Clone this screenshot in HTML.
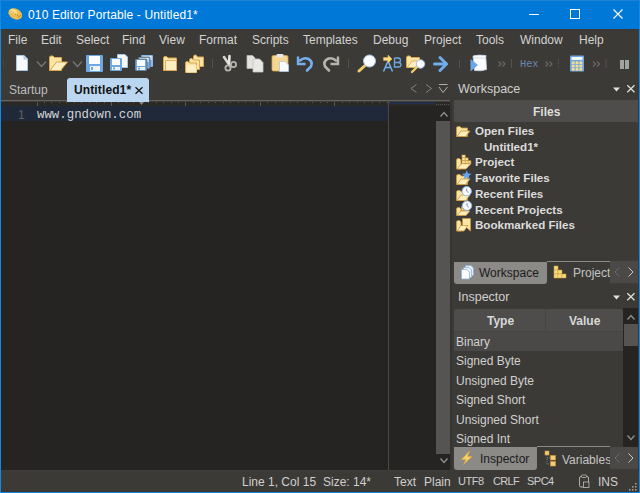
<!DOCTYPE html>
<html><head><meta charset="utf-8">
<style>
*{box-sizing:border-box}
html,body{margin:0;padding:0}
body{width:640px;height:493px;position:relative;overflow:hidden;background:#3c3a36;font-family:"Liberation Sans",sans-serif;font-size:12px;color:#d2d2d2}
.a{position:absolute;white-space:pre;line-height:1}
.t{position:absolute;white-space:pre;line-height:14px}
svg{position:absolute;overflow:visible}
</style></head><body>
<!-- title bar -->
<div class="a" style="left:0;top:0;width:640px;height:29px;background:#0078d7"></div>
<svg style="left:0;top:0" width="30" height="28"><ellipse cx="15.3" cy="13.9" rx="7.3" ry="5.2" transform="rotate(28 15.3 13.9)" fill="#ecbd4e"/><ellipse cx="13.5" cy="11.5" rx="4" ry="2.2" transform="rotate(20 13.5 11.5)" fill="#f8dc88"/><path d="M10.5 11 L19.5 16.5" stroke="#a77a28" stroke-width="1" stroke-dasharray="1 1.6"/><path d="M18 17.5 L21 15" stroke="#b88a30" stroke-width="1"/></svg>
<div class="t" style="left:28px;top:8px;color:#fff;font-size:12px;letter-spacing:0.14px">010 Editor Portable - Untitled1*</div>
<div class="a" style="left:529px;top:14px;width:10px;height:1px;background:#fff"></div>
<div class="a" style="left:570px;top:9px;width:10px;height:10px;border:1px solid #fff"></div>
<svg style="left:613px;top:9px" width="10" height="10"><path d="M0.5 0.5 L9.5 9.5 M9.5 0.5 L0.5 9.5" stroke="#fff" stroke-width="1.1"/></svg>

<!-- window borders -->
<div class="a" style="left:0;top:0;width:640px;height:1px;background:#1c82d6;z-index:50"></div>
<div class="a" style="left:0;top:0;width:1px;height:493px;background:#1787e0;z-index:50"></div>
<div class="a" style="left:639px;top:0;width:1px;height:493px;background:#1787e0;z-index:50"></div>
<div class="a" style="left:0;top:491px;width:640px;height:1px;background:#3a342c;z-index:49"></div>
<div class="a" style="left:0;top:492px;width:640px;height:1px;background:#1787e0;z-index:50"></div>

<!-- menu -->
<div class="t" style="left:8px;top:33px">File</div>
<div class="t" style="left:41px;top:33px">Edit</div>
<div class="t" style="left:76px;top:33px">Select</div>
<div class="t" style="left:122px;top:33px">Find</div>
<div class="t" style="left:159px;top:33px">View</div>
<div class="t" style="left:199px;top:33px">Format</div>
<div class="t" style="left:252px;top:33px">Scripts</div>
<div class="t" style="left:303px;top:33px">Templates</div>
<div class="t" style="left:373px;top:33px">Debug</div>
<div class="t" style="left:424px;top:33px">Project</div>
<div class="t" style="left:476px;top:33px">Tools</div>
<div class="t" style="left:520px;top:33px">Window</div>
<div class="t" style="left:579px;top:33px">Help</div>

<!-- toolbar -->
<svg style="left:0;top:0" width="640" height="80" viewBox="0 0 640 80">
<g id="tb">
<!-- grip -->
<path d="M3.5 59 V69" stroke="#4c4a45" stroke-width="1" stroke-dasharray="1 1"/>
<!-- new doc -->
<path d="M16.5 55.5 H24 L27.5 59 V70.5 H16.5 Z" fill="#f7f9fd" stroke="#a8c6e6" stroke-width="1"/>
<path d="M24 55.5 V59 H27.5" fill="#cadcf0" stroke="#a8c6e6" stroke-width="1"/>
<!-- chevron -->
<path d="M37 61.5 L41.5 66.5 L46 61.5" fill="none" stroke="#797874" stroke-width="1.2"/>
<!-- open folder -->
<path d="M49.5 57.5 Q49.5 56 51 56 H53 L54.5 57.5 H61.5 V70.5 H49.5 Z" fill="#f9e4a4" stroke="#d8a64c" stroke-width="1"/>
<path d="M50 70.5 L56.5 62 H67.5 L60.5 70.5 Z" fill="#fdefc2" stroke="#d8a64c" stroke-width="1"/>
<!-- chevron -->
<path d="M73 61.5 L77.5 66.5 L82 61.5" fill="none" stroke="#797874" stroke-width="1.2"/>
<!-- save -->
<rect x="86" y="55" width="17" height="17" rx="1" fill="#6ea8e4"/>
<rect x="89" y="56" width="11" height="8" fill="#fafcff"/>
<rect x="90" y="66" width="10" height="5" fill="#eef3fa"/>
<rect x="91" y="67" width="2" height="3" fill="#6ea8e4"/>
<!-- save as -->
<path d="M117.5 54.5 H125 L127.5 57 V67.5 H117.5 Z" fill="#f7f9fd" stroke="#a8c6e6" stroke-width="1"/>
<rect x="110" y="58" width="12" height="13" rx="1" fill="#6ea8e4"/>
<rect x="112" y="59" width="8" height="6" fill="#fafcff"/>
<rect x="112" y="67" width="8" height="3" fill="#eef3fa"/>
<rect x="113" y="67.5" width="2" height="2" fill="#6ea8e4"/>
<!-- save all -->
<rect x="141" y="55" width="12" height="12" rx="1" fill="#8ab8e8"/>
<rect x="142.5" y="56" width="9" height="4" fill="#eaf2fb"/>
<rect x="138" y="57" width="12" height="12" rx="1" fill="#7cb0e6" stroke="#3c3a36" stroke-width="0.6"/>
<rect x="139.5" y="58" width="9" height="4" fill="#f0f6fc"/>
<rect x="135" y="59" width="12" height="12" rx="1" fill="#6ea8e4" stroke="#3c3a36" stroke-width="0.6"/>
<rect x="137" y="60" width="8" height="6" fill="#fafcff"/>
<rect x="137" y="67" width="8" height="3" fill="#eef3fa"/>
<rect x="138" y="67.5" width="2" height="2" fill="#6ea8e4"/>
<!-- close folder -->
<path d="M163.5 58 Q163.5 56.5 165 56.5 H166.5 L168 58 H176.5 V70.5 H163.5 Z" fill="#f9e4a4" stroke="#d8a64c" stroke-width="1"/>
<path d="M165.5 60.5 H176.5 V70.5 H165.5 Z" fill="#fdefc2" stroke="#d8a64c" stroke-width="0.8"/>
<!-- close all -->
<path d="M193.5 57 Q193.5 55 195 55 H196 L197.5 57 H203.5 V66.5 H193.5 Z" fill="#f9e4a4" stroke="#d8a64c" stroke-width="1"/>
<path d="M189.5 60 Q189.5 58.5 191 58.5 H192 L193.5 60 H199.5 V69.5 H189.5 Z" fill="#f9e4a4" stroke="#d8a64c" stroke-width="1"/>
<path d="M185.5 63 Q185.5 61.5 187 61.5 H188 L189.5 63 H196.5 V72.5 H185.5 Z" fill="#f9e4a4" stroke="#d8a64c" stroke-width="1"/>
<path d="M186.5 65 H196.5 V72.5 H186.5 Z" fill="#fdefc2"/>
<!-- separator -->
<path d="M212.5 59 V68" stroke="#55534e" stroke-width="1"/>
<!-- scissors -->
<path d="M224 57 L230 66" stroke="#d8d8d0" stroke-width="2.6" stroke-linecap="round"/>
<path d="M229.5 56 L229 64" stroke="#e8e8e0" stroke-width="2.6" stroke-linecap="round"/>
<circle cx="228" cy="68" r="2.6" fill="none" stroke="#b4b4ac" stroke-width="1.8"/>
<circle cx="233.5" cy="64.5" r="2.6" fill="none" stroke="#b4b4ac" stroke-width="1.8"/>
<!-- copy -->
<path d="M247 55.5 H252.5 L255 58 V68.5 H247 Z" fill="#e3e3e0" stroke="#bdbdb8" stroke-width="0.8"/>
<path d="M253 59 H259.5 L263 62.5 V72 H253 Z" fill="#e8e8e5" stroke="#c4c4bf" stroke-width="0.8"/>
<!-- paste -->
<rect x="272" y="55.5" width="16" height="15.5" rx="1.5" fill="#f6d78f" stroke="#d9a64b" stroke-width="0.8"/>
<rect x="276.5" y="54" width="7" height="3.5" rx="1" fill="#e8e8ea"/>
<path d="M279.5 61.5 H285 L288.5 65 V71.5 H279.5 Z" fill="#fafbfd" stroke="#a8c6e6" stroke-width="0.8"/>
<!-- undo -->
<path d="M300 60.5 Q304 57 308.5 59 Q313 61.5 311 66.5 L307 70.5" fill="none" stroke="#74b0ee" stroke-width="2.6" stroke-linecap="round"/>
<path d="M298 56.5 V64 H305.5" fill="none" stroke="#74b0ee" stroke-width="2.4" stroke-linejoin="miter"/>
<!-- redo -->
<path d="M336 60.5 Q332 57 327.5 59 Q323 61.5 325 66.5 L329 70.5" fill="none" stroke="#b5b5b0" stroke-width="2.6" stroke-linecap="round"/>
<path d="M338 56.5 V64 H330.5" fill="none" stroke="#b5b5b0" stroke-width="2.4"/>
<!-- separator -->
<path d="M348.5 59 V68" stroke="#55534e" stroke-width="1"/>
<!-- find -->
<path d="M359 71 L365 65.5" stroke="#f2ce6a" stroke-width="3" stroke-linecap="round"/>
<circle cx="369.5" cy="61" r="6" fill="#fbfcff" stroke="#a8c4e4" stroke-width="1"/>
<!-- replace -->
<path d="M383.5 71.5 L388 61 L392.5 71.5 M385.2 67.5 H390.8" fill="none" stroke="#74b0ee" stroke-width="1.5"/>
<path d="M394.5 58 H398 Q400.5 58 400.5 60.3 Q400.5 62.5 398 62.5 H394.5 M398 62.5 Q401 62.5 401 64.8 Q401 67 398 67 H394.5 V58" fill="none" stroke="#6da7e6" stroke-width="1.3"/>
<path d="M383.5 57.5 H388 V55 L392 59 L388 63 V60.5 H383.5 Z" fill="#f8dc84" stroke="#e2b450" stroke-width="0.6"/>
<!-- find in files -->
<path d="M406.5 57.5 Q406.5 56 408 56 H410 L411.5 57.5 H419.5 V67.5 H406.5 Z" fill="#f9e4a4" stroke="#d8a64c" stroke-width="1"/>
<path d="M407 67.5 L412 61 H420 L415 67.5 Z" fill="#fdefc2" stroke="#d8a64c" stroke-width="0.8"/>
<path d="M412 72 L417 67" stroke="#f2ce6a" stroke-width="2.4" stroke-linecap="round"/>
<circle cx="420.5" cy="64" r="4.2" fill="#fbfcff" stroke="#a8c4e4" stroke-width="1"/>
<!-- goto -->
<path d="M434.5 64 H446" stroke="#6fadec" stroke-width="3" stroke-linecap="round"/>
<path d="M440 57.5 L446.5 64 L440 70.5" fill="none" stroke="#6fadec" stroke-width="3" stroke-linecap="round" stroke-linejoin="round"/>
<!-- separator -->
<path d="M459.5 60 V68" stroke="#55534e" stroke-width="1"/>
<!-- script -->
<path d="M473 56 Q478 54.5 486 55.5 Q485.5 58 486 60 L486.5 69.5 Q481 71.5 474.5 70.5 Z" fill="#fbfcfe" stroke="#c9d8ea" stroke-width="0.8"/>
<path d="M473.5 58 H485.5" stroke="#8fb6e0" stroke-width="0.8" stroke-dasharray="1 1"/><path d="M470.5 59 L478 65 L470.5 71.5 Z" fill="#6aa8ea"/>
<!-- >> -->
<path d="M498.5 61.5 L501 64 L498.5 66.5 M502.5 61.5 L505 64 L502.5 66.5" fill="none" stroke="#6a6964" stroke-width="1.2"/>
<path d="M511.5 59 V68" stroke="#55534e" stroke-width="1"/>
<path d="M545.5 61.5 L548 64 L545.5 66.5 M549.5 61.5 L552 64 L549.5 66.5" fill="none" stroke="#6a6964" stroke-width="1.2"/>
<path d="M558.5 59 V68" stroke="#55534e" stroke-width="1" stroke-dasharray="1 1"/>
<!-- calculator -->
<rect x="570" y="55.5" width="14" height="16" rx="1" fill="#6ea8e4"/>
<rect x="571.5" y="57" width="11" height="3" fill="#f4f8fd"/>
<g fill="#f6de8c"><rect x="571.8" y="61.5" width="2.8" height="2.6"/><rect x="575.6" y="61.5" width="2.8" height="2.6"/><rect x="579.4" y="61.5" width="2.8" height="2.6"/><rect x="571.8" y="64.8" width="2.8" height="2.6"/><rect x="575.6" y="64.8" width="2.8" height="2.6"/><rect x="579.4" y="64.8" width="2.8" height="2.6"/><rect x="571.8" y="68.1" width="2.8" height="2.6"/><rect x="575.6" y="68.1" width="2.8" height="2.6"/><rect x="579.4" y="68.1" width="2.8" height="2.6"/></g>
<path d="M593 61.5 L595.5 64 L593 66.5 M597 61.5 L599.5 64 L597 66.5" fill="none" stroke="#6a6964" stroke-width="1.2"/>
<path d="M606 59 V68" stroke="#55534e" stroke-width="1"/>
<!-- pause -->
<rect x="620" y="60" width="4" height="9" fill="#a3a39d"/>
<rect x="625" y="60" width="4" height="9" fill="#a3a39d"/>
</g>
</svg>
<div class="a" style="left:520px;top:59px;font-family:'Liberation Mono',monospace;font-size:10.3px;line-height:10px;color:#6a88b0">Hex</div>

<!-- tab bar -->
<div class="t" style="left:9px;top:83px;color:#bdbdbd">Startup</div>
<div class="a" style="left:67px;top:78px;width:82px;height:24px;z-index:2;background:#bad6f0;border-radius:3px 3px 0 0"></div>
<div class="t" style="left:74px;top:83px;color:#111;font-weight:bold;z-index:3;letter-spacing:0.12px">Untitled1*</div>
<svg style="left:135px;top:87px;z-index:3" width="8" height="8"><path d="M0.5 0.3 L7.5 6.8 M7.5 0.3 L0.5 6.8" stroke="#111" stroke-width="1.2"/></svg>
<svg style="left:410px;top:84px" width="40" height="10"><path d="M6.5 0.5 L1 4.5 L6.5 8.5" fill="none" stroke="#85847f" stroke-width="1"/><path d="M16 0.5 L21.5 4.5 L16 8.5" fill="none" stroke="#85847f" stroke-width="1"/><path d="M29 0.5 H37.5 M29 3 L33 8.5 L37.5 3" fill="none" stroke="#b0aea8" stroke-width="1"/></svg>

<!-- editor -->
<div class="a" style="left:1px;top:100px;width:450px;height:1px;background:#64635f"></div>
<div class="a" style="left:1px;top:101px;width:450px;height:1px;background:#3e3d3a"></div>
<div class="a" style="left:1px;top:102px;width:450px;height:4px;background:#2a2927"></div>
<div class="a" style="left:1px;top:106px;width:449px;height:364px;background:#252422"></div>
<div class="a" style="left:1px;top:106px;width:387px;height:15px;background:#1f2939"></div>
<svg style="left:0;top:0" width="640" height="120"><path d="M37.5 102 V106 M44.5 102 V103 M51.5 102 V103 M59.5 102 V103 M66.5 102 V103 M74.5 102 V103 M81.5 102 V103 M89.5 102 V103 M96.5 102 V103 M104.5 102 V103 M111.5 102 V106 M118.5 102 V103 M126.5 102 V103 M133.5 102 V103 M141.5 102 V103 M148.5 102 V103 M156.5 102 V103 M163.5 102 V103 M171.5 102 V103 M178.5 102 V103 M185.5 102 V106 M193.5 102 V103 M200.5 102 V103 M208.5 102 V103 M215.5 102 V103 M223.5 102 V103 M230.5 102 V103 M238.5 102 V103 M245.5 102 V103 M253.5 102 V103 M260.5 102 V106 M267.5 102 V103 M275.5 102 V103 M282.5 102 V103 M290.5 102 V103 M297.5 102 V103 M305.5 102 V103 M312.5 102 V103 M320.5 102 V103 M327.5 102 V103 M334.5 102 V106 M342.5 102 V103 M349.5 102 V103 M357.5 102 V103 M364.5 102 V103 M372.5 102 V103 M379.5 102 V103 M387.5 102 V103" stroke="#5a5854" stroke-width="1"/><path d="M139 102 H144 L141.5 105Z" fill="#85847f"/><rect x="389" y="102" width="46" height="2" fill="#22304a"/><path d="M436 104.5 H450" stroke="#55534f" stroke-dasharray="1 1"/></svg>
<div class="a" style="left:388px;top:101px;width:1px;height:369px;background:#4a4946"></div>
<div class="a" style="left:18px;top:108px;color:#626262;font-family:'Liberation Sans',sans-serif;font-size:12px;line-height:14px">1</div>
<div class="a" style="left:37px;top:108px;color:#d4d4d4;font-family:'Liberation Mono',monospace;font-size:12.4px;line-height:14px">www.gndown.com</div>
<!-- scrollbar -->
<div class="a" style="left:436px;top:121px;width:14px;height:333px;background:#555452"></div>
<svg style="left:439.5px;top:111px" width="8" height="6"><path d="M0.5 5.5 L4 1.5 L7.5 5.5" fill="none" stroke="#8e8d8a" stroke-width="1.4"/></svg>
<svg style="left:439.5px;top:458px" width="8" height="6"><path d="M0.5 0.5 L4 4.5 L7.5 0.5" fill="none" stroke="#8e8d8a" stroke-width="1.4"/></svg>

<!-- right panel -->
<div class="a" style="left:450px;top:100px;width:2px;height:370px;background:#353431"></div>
<div class="t" style="left:458px;top:82px;font-size:12.5px;color:#d0d0d0">Workspace</div>
<svg style="left:613px;top:86px" width="22" height="8"><path d="M0 1.5 H7 L3.5 5.5Z" fill="#e0e0e0"/><path d="M14.3 -0.7 L21.5 6.3 M21.5 -0.7 L14.3 6.3" stroke="#e4e4e0" stroke-width="1.2"/></svg>
<div class="a" style="left:454px;top:100px;width:184px;height:22px;background:#4e4d4b;border-radius:2px 0 0 0"></div>
<div class="t" style="left:533px;top:105px;font-weight:bold;color:#dcdcdc">Files</div>

<div class="t" style="left:475px;top:124px;font-weight:bold;font-size:11.6px;color:#dcdcdc">Open Files</div>
<div class="t" style="left:484px;top:140px;font-weight:bold;font-size:11.6px;color:#dcdcdc">Untitled1*</div>
<div class="t" style="left:475px;top:155px;font-weight:bold;font-size:11.6px;color:#dcdcdc">Project</div>
<div class="t" style="left:475px;top:171px;font-weight:bold;font-size:11.6px;color:#dcdcdc">Favorite Files</div>
<div class="t" style="left:475px;top:187px;font-weight:bold;font-size:11.6px;color:#dcdcdc">Recent Files</div>
<div class="t" style="left:475px;top:203px;font-weight:bold;font-size:11.6px;color:#dcdcdc">Recent Projects</div>
<div class="t" style="left:475px;top:218px;font-weight:bold;font-size:11.6px;color:#dcdcdc">Bookmarked Files</div>

<!-- panel tabs -->
<div class="a" style="left:454px;top:262px;width:93px;height:22px;background:#8b8a87;border-radius:0 0 3px 3px"></div>
<div class="t" style="left:479px;top:266px;color:#1b1b1b">Workspace</div>
<div class="a" style="left:547px;top:261px;width:63px;height:1px;background:#8b8a87"></div>
<div class="t" style="left:573px;top:266px;color:#c4c4c4">Project</div>
<div class="a" style="left:610px;top:261px;width:28px;height:22px;background:#4a4947"></div>
<svg style="left:614px;top:267px" width="22" height="10"><path d="M5.5 0.5 L1 5 L5.5 9.5" fill="none" stroke="#6e6d6a" stroke-width="1"/><path d="M14.5 0.5 L19 5 L14.5 9.5" fill="none" stroke="#c8c8c8" stroke-width="1"/></svg>

<div class="t" style="left:458px;top:290px;font-size:12.5px;color:#d0d0d0">Inspector</div>
<svg style="left:613px;top:294px" width="22" height="8"><path d="M0 1.5 H7 L3.5 5.5Z" fill="#e0e0e0"/><path d="M14.3 -0.7 L21.5 6.3 M21.5 -0.7 L14.3 6.3" stroke="#e4e4e0" stroke-width="1.2"/></svg>

<div class="a" style="left:454px;top:309px;width:169px;height:22px;background:#4e4d4b;border-radius:3px 3px 0 0"></div>

<div class="t" style="left:487px;top:314px;font-weight:bold;color:#d8d8d8">Type</div>
<div class="t" style="left:569px;top:314px;font-weight:bold;color:#d8d8d8">Value</div>
<div class="a" style="left:454px;top:331px;width:169px;height:20px;background:#4a4947"></div>
<svg style="left:0;top:0" width="640" height="493"><path d="M545.5 309 V331" stroke="#403f3d" stroke-width="1" stroke-dasharray="1 1"/><path d="M454 331.5 H623" stroke="#403f3d" stroke-width="1" stroke-dasharray="1 1"/></svg>
<div class="t" style="left:456px;top:335px;color:#d0d0d0">Binary</div>
<div class="t" style="left:456px;top:354px;color:#d0d0d0">Signed Byte</div>
<div class="t" style="left:456px;top:374px;color:#d0d0d0">Unsigned Byte</div>
<div class="t" style="left:456px;top:393px;color:#d0d0d0">Signed Short</div>
<div class="t" style="left:456px;top:413px;color:#d0d0d0">Unsigned Short</div>
<div class="t" style="left:456px;top:432px;color:#d0d0d0">Signed Int</div>
<div class="a" style="left:623px;top:308px;width:15px;height:139px;background:#252422"></div>
<div class="a" style="left:624px;top:324px;width:14px;height:22px;background:#555452"></div>
<svg style="left:627px;top:314px" width="8" height="6"><path d="M0.5 5.5 L4 1.5 L7.5 5.5" fill="none" stroke="#8e8d8a" stroke-width="1.4"/></svg>
<svg style="left:627px;top:435px" width="8" height="6"><path d="M0.5 0.5 L4 4.5 L7.5 0.5" fill="none" stroke="#8e8d8a" stroke-width="1.4"/></svg>

<!-- bottom panel tabs -->
<div class="a" style="left:454px;top:447px;width:83px;height:23px;background:#8b8a87;border-radius:0 0 3px 3px"></div>
<div class="t" style="left:480px;top:452px;color:#1b1b1b">Inspector</div>
<div class="a" style="left:537px;top:446px;width:73px;height:1px;background:#8b8a87"></div>
<div class="t" style="left:562px;top:453px;color:#c4c4c4">Variables</div>
<div class="a" style="left:610px;top:447px;width:28px;height:22px;background:#4a4947"></div>
<svg style="left:614px;top:453px" width="22" height="10"><path d="M5.5 0.5 L1 5 L5.5 9.5" fill="none" stroke="#6e6d6a" stroke-width="1"/><path d="M14.5 0.5 L19 5 L14.5 9.5" fill="none" stroke="#c8c8c8" stroke-width="1"/></svg>

<!-- status bar -->
<svg style="left:0;top:0" width="640" height="493"><path d="M2 470.5 H450" stroke="#4a4843" stroke-width="1" stroke-dasharray="1 3"/></svg>
<div class="t" style="left:242px;top:475px;color:#cfcfcf">Line 1, Col 15</div>
<div class="t" style="left:323px;top:475px;color:#cfcfcf">Size: 14*</div>
<div class="t" style="left:394px;top:475px;color:#cfcfcf">Text</div>
<div class="t" style="left:424px;top:475px;color:#cfcfcf">Plain</div>
<div class="t" style="left:458px;top:474px;color:#cfcfcf;font-size:11px;letter-spacing:-0.5px">UTF8</div>
<div class="t" style="left:493px;top:474px;color:#cfcfcf;font-size:11px;letter-spacing:-0.7px">CRLF</div>
<div class="t" style="left:527px;top:474px;color:#cfcfcf;font-size:11px;letter-spacing:-0.5px">SPC4</div>
<div class="t" style="left:598px;top:475px;color:#cfcfcf">INS</div>
<!-- icons -->
<svg style="left:0;top:0" width="640" height="493" viewBox="0 0 640 493">

<g transform="translate(456 126)">
<path d="M0.5 2 Q0.5 0.5 2 0.5 H4 L5.5 2 H11.5 V10.5 H0.5 Z" fill="#f8e3a0" stroke="#cc963c" stroke-width="0.8"/>
<path d="M1 10.5 L5 5 H14 L9.5 10.5 Z" fill="#fcefbf" stroke="#cc963c" stroke-width="0.8"/>
</g>
<!-- project -->
<path d="M456.5 160 Q456.5 158.5 458 158.5 H459.5 L461 160 V169 H456.5 Z" fill="#f8e3a0" stroke="#cc963c" stroke-width="0.8"/>
<g transform="translate(462 155)" fill="#fae7a6" stroke="#cc963c" stroke-width="0.6">
<rect x="0" y="0" width="3.2" height="2.9"/><rect x="0" y="2.9" width="3.2" height="2.9"/><rect x="0" y="5.8" width="3.2" height="2.9"/>
<rect x="3.2" y="2.9" width="2.9" height="2.9"/><rect x="3.2" y="5.8" width="2.9" height="2.9"/>
<rect x="6.1" y="5.8" width="2.8" height="2.9"/>
</g>
<path d="M457 169 L461.5 163.7 H471 L466 169 Z" fill="#fcefbf" stroke="#cc963c" stroke-width="0.8"/>
<!-- favorite -->
<g transform="translate(456 174)">
<path d="M0.5 2 Q0.5 0.5 2 0.5 H4 L5.5 2 H11.5 V10.5 H0.5 Z" fill="#f8e3a0" stroke="#cc963c" stroke-width="0.8"/>
<path d="M1 10.5 L5 5 H14 L9.5 10.5 Z" fill="#fcefbf" stroke="#cc963c" stroke-width="0.8"/>
</g>
<path d="M466.7 170.3 L468.1 173.5 L471.5 173.8 L468.9 176 L469.8 179.3 L466.7 177.5 L463.6 179.3 L464.5 176 L461.9 173.8 L465.3 173.5 Z" fill="#64a4ec"/>
<!-- recent files -->
<g transform="translate(456 190)">
<path d="M0.5 2 Q0.5 0.5 2 0.5 H4 L5.5 2 H11.5 V10.5 H0.5 Z" fill="#f8e3a0" stroke="#cc963c" stroke-width="0.8"/>
<path d="M1 10.5 L5 5 H14 L9.5 10.5 Z" fill="#fcefbf" stroke="#cc963c" stroke-width="0.8"/>
</g>
<circle cx="466.7" cy="191.2" r="4.7" fill="#f6f8fc" stroke="#92b6e0" stroke-width="0.9"/>
<path d="M466.7 188.6 V191.2 L468.5 192.7" fill="none" stroke="#5f7da6" stroke-width="0.8"/>
<!-- recent projects -->
<path d="M456.5 209 Q456.5 207.5 458 207.5 H459.5 L461 209 V215.5 H456.5 Z" fill="#f8e3a0" stroke="#cc963c" stroke-width="0.8"/>
<g transform="translate(461.5 206.5) scale(0.7)" fill="#fae7a6" stroke="#cc963c" stroke-width="0.6">
<rect x="0" y="0" width="3.2" height="2.9"/><rect x="0" y="2.9" width="3.2" height="2.9"/><rect x="0" y="5.8" width="3.2" height="2.9"/>
<rect x="3.2" y="2.9" width="2.9" height="2.9"/><rect x="3.2" y="5.8" width="2.9" height="2.9"/>
<rect x="6.1" y="5.8" width="2.8" height="2.9"/>
</g>
<path d="M457 215.5 L461 211 H470 L466 215.5 Z" fill="#fcefbf" stroke="#cc963c" stroke-width="0.8"/>
<circle cx="467" cy="205.7" r="4.7" fill="#f6f8fc" stroke="#92b6e0" stroke-width="0.9"/>
<path d="M467 203.1 V205.7 L468.8 207.2" fill="none" stroke="#5f7da6" stroke-width="0.8"/>
<!-- bookmarked -->
<path d="M456.5 222 Q456.5 220.5 458 220.5 H459.5 L461 222 V231 H456.5 Z" fill="#f8e3a0" stroke="#cc963c" stroke-width="0.8"/>
<path d="M462.5 218.5 H470.5 V231 L466.5 227.5 L462.5 231 Z" fill="#f9e6a4" stroke="#cc963c" stroke-width="0.8"/>
<path d="M457 231 L461 225.5 H468 L464 231 Z" fill="#fcefbf" stroke="#cc963c" stroke-width="0.8"/>
<!-- panel tab icons: workspace -->
<g>
<path d="M465.5 265.5 H471 L473.5 268 V275.5 H465.5 Z" fill="#e4ecf6" stroke="#8fb0d6" stroke-width="0.8"/>
<path d="M463.5 267.5 H469 L471.5 270 V277.5 H463.5 Z" fill="#eef3fa" stroke="#8fb0d6" stroke-width="0.8"/>
<path d="M461.5 269.5 H467 L469.5 272 V279 H461.5 Z" fill="#fafcff" stroke="#8fb0d6" stroke-width="0.8"/>
</g>
<!-- project tab icon -->
<g fill="#f6d97e" stroke="#c99a3c" stroke-width="0.5">
<rect x="554" y="266" width="4" height="4"/><rect x="554" y="270" width="4" height="4"/><rect x="554" y="274" width="4" height="4"/>
<rect x="558" y="270" width="4" height="4"/><rect x="558" y="274" width="4" height="4"/>
<rect x="562" y="274" width="4" height="4"/>
</g>
<!-- inspector lightning -->
<path d="M469.5 451 L461.5 459.5 H466 L463.5 464.5 L472 456.5 H467.5 Z" fill="#f6d25e" stroke="#dca83a" stroke-width="0.6"/>
<!-- variables icon -->
<g>
<rect x="545" y="451" width="4" height="4" fill="#f2cf74" stroke="#c89538" stroke-width="0.6"/>
<rect x="550.5" y="455.5" width="5" height="4.5" fill="#f2cf74" stroke="#c89538" stroke-width="0.6"/>
<rect x="550.5" y="461.5" width="5" height="4.5" fill="#f2cf74" stroke="#c89538" stroke-width="0.6"/>
<path d="M547 455 V464 H550.5 M547 458 H550.5" fill="none" stroke="#8a8a88" stroke-width="0.8" stroke-dasharray="1 1"/>
</g>
<!-- status clipboard -->
<g>
<rect x="579.5" y="476.5" width="9" height="10.5" rx="1.5" fill="none" stroke="#bdbdb8" stroke-width="0.9"/>
<rect x="581.5" y="475" width="5" height="2.5" rx="0.8" fill="#3c3a36" stroke="#bdbdb8" stroke-width="0.8"/>
<rect x="583.5" y="482" width="5.5" height="5.5" fill="#3c3a36" stroke="#bdbdb8" stroke-width="0.8"/>
</g>
<!-- size grip -->
<g fill="#9c9c98">
<rect x="635" y="483" width="1.6" height="1.6"/>
<rect x="632" y="486" width="1.6" height="1.6"/><rect x="635" y="486" width="1.6" height="1.6"/>
<rect x="629" y="489" width="1.6" height="1.6"/><rect x="632" y="489" width="1.6" height="1.6"/><rect x="635" y="489" width="1.6" height="1.6"/>
</g>
</svg>

</body></html>
